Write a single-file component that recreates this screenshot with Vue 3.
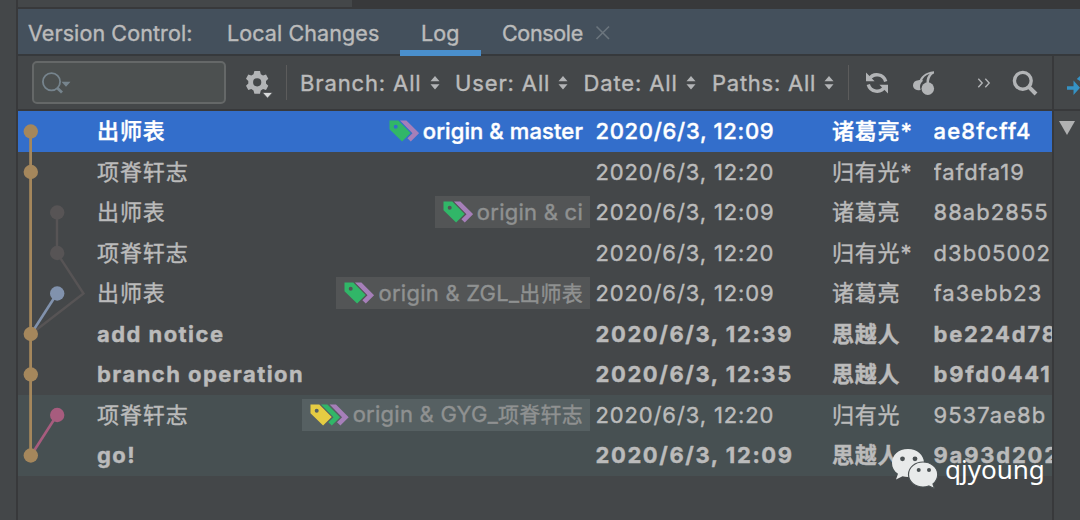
<template>
  <div class="window">
    <div class="gutter"></div>

    <div class="main">
      <div class="editor-strip">
        <div class="editor-edge"></div>
      </div>

      <div class="tabs">
        <span class="title">Version Control:</span>
        <div
          v-for="tab in tabs"
          :key="tab.name"
          :class="['tab', tab.cls, { active: tab.name === activeTab }]"
          @click="activeTab = tab.name"
        >
          {{ tab.name }}
        </div>
        <svg class="close" width="16" height="16" viewBox="0 0 16 16">
          <path d="M1.5 1.5L14 14M14 1.5L1.5 14" stroke="#6b757d" stroke-width="1.6" />
        </svg>
      </div>

      <div class="body">
        <div class="log">
          <div class="toolbar">
            <div class="search">
              <svg width="32" height="26" viewBox="0 0 32 26" fill="none">
                <circle cx="10.5" cy="9.8" r="8.6" stroke="#76848d" stroke-width="1.8" />
                <path d="M16 15.8L21 20.6" stroke="#76848d" stroke-width="2.8" />
                <path d="M20.5 9.8H29.5L25 14.8Z" fill="#76848d" />
              </svg>
            </div>
            <svg class="gear" width="28" height="30" viewBox="0 0 28 30">
              <path
                fill="#b2b4b6"
                fill-rule="evenodd"
                d="M9.4 1H15L15.8 4.2L18 5.4L21 4.4L23.3 8.7L21 11V13.6L23.3 15.7L21 20L18 19.1L15.8 20.4L15 23.7H9.4L8.5 20.4L6.3 19.1L3.3 20L1 15.7L3.3 13.5V11L1 8.7L3.3 4.4L6.3 5.4L8.5 4.2ZM12.2 8.2A4.1 4.1 0 1 0 12.2 16.4A4.1 4.1 0 1 0 12.2 8.2Z"
              />
              <path d="M17 22.3H28L22.5 28.3Z" fill="#d8dadb" stroke="#444749" stroke-width="1" />
            </svg>
            <i class="divider"></i>
            <div v-for="f in filters" :key="f" class="filter">
              <span>{{ f }}: All</span>
              <svg width="10" height="16" viewBox="0 0 10 16" fill="#b2b4b6">
                <path d="M0.5 6.3L5 1L9.5 6.3ZM0.5 9.3H9.5L5 14.6Z" />
              </svg>
            </div>
            <i class="divider second"></i>
            <svg class="refresh" width="24" height="24" viewBox="0 0 24 24">
              <g fill="none" stroke="#b2b4b6" stroke-width="3.4">
                <path d="M4.2 8.3A9 9 0 0 1 20.7 10.5" />
                <path d="M3.3 13.5A9 9 0 0 0 19.8 15.7" />
              </g>
              <path d="M1 1.5V10.3H9.6ZM23 22.5V13.7H14.4Z" fill="#b2b4b6" />
            </svg>
            <svg class="cherry" width="26" height="26" viewBox="0 0 26 26">
              <g fill="#b2b4b6">
                <path d="M7.3 10.2C9 9.2 11 9.7 12.2 10.7C9.5 12.5 8.2 16 9.7 19.7C5.5 21.5 2 18.7 2 15.3C2 12.5 4 10.5 7.3 10.2Z" />
                <circle cx="16.8" cy="18.6" r="6.3" />
                <path d="M8 12.5C9.3 7 13.5 2.2 23 1.2V3.5C20 4.5 18 8.5 18 13H15.5C15.3 8.7 16.5 5.8 18.8 3.8C14.5 5 11.5 8 10.5 12Z" />
              </g>
            </svg>
            <svg class="more" width="14" height="10" viewBox="0 0 14 10">
              <path d="M1.3 0.8L5.2 5L1.3 9.2M8.3 0.8L12.2 5L8.3 9.2" fill="none" stroke="#b2b4b6" stroke-width="1.4" />
            </svg>
            <svg class="find" width="26" height="26" viewBox="0 0 26 26" fill="none" stroke="#b2b4b6">
              <circle cx="10.8" cy="10.8" r="8.4" stroke-width="3.4" />
              <path d="M16.8 16.8L24 24" stroke-width="4" />
            </svg>
          </div>

          <div class="table">
            <svg class="graph" width="79" height="365" viewBox="0 0 79 365" fill="none">
              <path d="M39 101.5V142L65.5 182.5L13 223" stroke="#575455" stroke-width="2.4" />
              <path d="M39 182.5L13 223" stroke="#8192ad" stroke-width="2.6" />
              <path d="M39 304L13 344.5" stroke="#a75c7e" stroke-width="2.6" />
              <path d="M12.6 20.5V344.5" stroke="#a5875c" stroke-width="2.8" />
              <circle v-for="n in nodes" :key="n.y" :cx="n.x" :cy="n.y" r="7.2" :fill="n.color" />
            </svg>
            <div
              v-for="c in commits"
              :key="c.hash"
              :class="['row', { selected: c.selected, own: c.own, current: c.current }]"
            >
              <div class="subject">{{ c.subject }}</div>
              <div class="ref-cell">
                <div v-if="c.tags" class="ref">
                  <svg
                    :width="c.tags.length * 8.6 + 13"
                    height="22"
                    :viewBox="`0 0 ${c.tags.length * 8.6 + 13} 22`"
                  >
                    <path
                      v-for="(color, i) in c.tags.slice(1)"
                      :key="color"
                      :transform="`translate(${(i + 1) * 8.6} 0)`"
                      d="M2.4 0.5H8.8L21.5 13.2L13.2 21.5L9.8 18.3L14.9 13.2Z"
                      :fill="color"
                    />
                    <path
                      fill-rule="evenodd"
                      d="M0.5 0.5H9.3L21.7 13L13.1 21.5L0.5 9.3ZM6.7 4.8A2 2 0 1 0 6.7 8.8A2 2 0 1 0 6.7 4.8Z"
                      :fill="c.tags[0]"
                    />
                  </svg>
                  <span>{{ c.branch }}<b v-if="c.cjk">{{ c.cjk }}</b></span>
                </div>
              </div>
              <div class="date">{{ c.date }}</div>
              <div class="author">{{ c.author }}</div>
              <div class="hash">{{ c.hash }}</div>
            </div>
          </div>
        </div>

        <div class="side">
          <div class="side-bar">
            <svg width="13" height="24" viewBox="0 0 13 24" fill="#3592c4">
              <path d="M0 11.3H6.5V5.5L13 12.8L6.5 20V14.8H0ZM9.8 4L13 1V6Z" />
            </svg>
          </div>
          <div class="side-tree">
            <svg width="16" height="14" viewBox="0 0 16 14">
              <path d="M0 0H16L8 14Z" fill="#b0b1b2" />
            </svg>
          </div>
        </div>
      </div>
    </div>

    <div class="watermark">
      <svg width="48" height="42" viewBox="0 0 48 42">
        <path
          d="M17 1C7.5 1 1 7 1 15C1 19.5 3.2 23.2 7 25.8L5 31.5L11.5 28.3C13.3 28.8 15 29 17 29C26 29 33 23 33 15C33 7 26 1 17 1Z"
          fill="#e8eaea"
        />
        <path
          d="M32 14C24 14 17.5 19.5 17.5 26.5C17.5 33.5 24 39 32 39C34 39 36 38.7 37.7 38L43.5 40.5L42 36C45 33.5 46.7 30.5 46.7 26.5C46.7 19.5 40 14 32 14Z"
          fill="#e8eaea"
          stroke="#4a5052"
          stroke-width="1.2"
        />
        <g fill="#4a5052">
          <circle cx="11.5" cy="10.8" r="2.4" />
          <circle cx="24" cy="10.8" r="2.4" />
          <circle cx="27.7" cy="22" r="2" />
          <circle cx="38" cy="22" r="2" />
        </g>
      </svg>
      <span>qjyoung</span>
    </div>
  </div>
</template>

<script setup>
import { ref } from "vue";

const tabs = [
  { name: "Local Changes", cls: "local" },
  { name: "Log", cls: "log-tab" },
  { name: "Console", cls: "console" },
];
const activeTab = ref("Log");

const filters = ["Branch", "User", "Date", "Paths"];

const GREEN = "#31b668";
const PURPLE = "#a67fb9";
const YELLOW = "#e5cc43";

const commits = [
  { subject: "出师表", branch: "origin & master", tags: [GREEN, PURPLE], date: "2020/6/3, 12:09", author: "诸葛亮*", hash: "ae8fcff4", selected: true },
  { subject: "项脊轩志", date: "2020/6/3, 12:20", author: "归有光*", hash: "fafdfa19" },
  { subject: "出师表", branch: "origin & ci", tags: [GREEN, PURPLE], date: "2020/6/3, 12:09", author: "诸葛亮", hash: "88ab2855" },
  { subject: "项脊轩志", date: "2020/6/3, 12:20", author: "归有光*", hash: "d3b05002" },
  { subject: "出师表", branch: "origin & ZGL_", cjk: "出师表", tags: [GREEN, PURPLE], date: "2020/6/3, 12:09", author: "诸葛亮", hash: "fa3ebb23" },
  { subject: "add notice", date: "2020/6/3, 12:39", author: "思越人", hash: "be224d78", own: true },
  { subject: "branch operation", date: "2020/6/3, 12:35", author: "思越人", hash: "b9fd0441", own: true },
  { subject: "项脊轩志", branch: "origin & GYG_", cjk: "项脊轩志", tags: [YELLOW, GREEN, PURPLE], date: "2020/6/3, 12:20", author: "归有光", hash: "9537ae8b", current: true },
  { subject: "go!", date: "2020/6/3, 12:09", author: "思越人", hash: "9a93d202", own: true, current: true },
];

// 提交圖節點
const nodes = [
  { x: 12.8, y: 20.5, color: "#a5875c" },
  { x: 12.8, y: 61, color: "#a5875c" },
  { x: 39.2, y: 101.5, color: "#575455" },
  { x: 39.2, y: 142, color: "#575455" },
  { x: 39.2, y: 182.5, color: "#8192ad" },
  { x: 12.8, y: 223, color: "#a5875c" },
  { x: 12.8, y: 263.5, color: "#a5875c" },
  { x: 39.2, y: 304, color: "#a75c7e" },
  { x: 12.8, y: 344.5, color: "#a5875c" },
];
</script>

<style>
body {
  background: #444749;
}
</style>

<style scoped>
.window {
  position: relative;
  display: flex;
  width: 1080px;
  height: 520px;
  overflow: hidden;
  background: #444749;
  color: #bbbbbb;
  font-family: Inter, "Noto Sans CJK SC", sans-serif;
  font-size: 22px;
  white-space: nowrap;
  -webkit-text-stroke: 0.4px currentColor;
}
.window * {
  box-sizing: border-box;
}
svg {
  display: block;
  flex: none;
}

.gutter {
  flex: none;
  width: 18px;
  border-right: 2px solid #38393b;
}
.main {
  flex: none;
  width: 1062px;
  display: flex;
  flex-direction: column;
}
.editor-strip {
  height: 9px;
  background: #38393b;
}
.editor-edge {
  width: 334px;
  height: 7px;
  background: #444749;
}

/* 分頁列 */
.tabs {
  display: flex;
  align-items: stretch;
  height: 47px;
  padding-left: 10px;
  border-bottom: 2px solid #36393c;
  background: #44505c;
  font-size: 21.5px;
  line-height: 49px;
}
.title {
  width: 181px;
  letter-spacing: 0.1px;
}
.tab {
  height: 47px;
  letter-spacing: 0.1px;
}
.tab.local {
  width: 191px;
  padding-left: 18px;
}
.tab.log-tab {
  width: 81px;
  padding-left: 21px;
}
.tab.console {
  width: 114px;
  padding-left: 21px;
  letter-spacing: -0.35px;
}
.tab.active {
  border-bottom: 6px solid #4a8fcc;
}
.close {
  margin: 16px 0 0;
}

.body {
  flex: 1;
  display: flex;
}
.log {
  width: 1034px;
  overflow: hidden;
}

/* 工具列 */
.toolbar {
  display: flex;
  align-items: center;
  height: 55px;
  padding-left: 14px;
  border-bottom: 2px solid #38393b;
}
.search {
  width: 194px;
  height: 43px;
  padding: 9px 0 0 7px;
  border: 2px solid #656868;
  border-radius: 5px;
  background: #4c5050;
}
.gear {
  margin: 4px 0 0 19px;
}
.divider {
  width: 1px;
  height: 35px;
  margin: 0 13px;
  background: #5c5c5c;
}
.filter {
  display: flex;
  align-items: center;
  width: 128.5px;
  gap: 8px;
  letter-spacing: 0.87px;
}
.filter:nth-of-type(2) {
  width: 155px;
}
.filter:nth-of-type(5) {
  width: 123px;
  letter-spacing: 0.75px;
}
.divider.second {
  margin: 0 16px 0 13px;
}
.cherry {
  margin-left: 22px;
}
.more {
  margin-left: 40px;
}
.find {
  margin-left: 21px;
}

/* 提交列表 */
.table {
  position: relative;
}
.graph {
  position: absolute;
  left: 0;
  top: 0;
}
.row {
  display: flex;
  align-items: center;
  height: 40.5px;
  padding-left: 79px;
  line-height: 40px;
}
.subject {
  width: 206px;
  letter-spacing: 0.9px;
}
.ref-cell {
  display: flex;
  justify-content: flex-end;
  width: 287px;
}
.ref {
  display: flex;
  align-items: center;
  gap: 4px;
  height: 32px;
  padding: 0 7px 0 8px;
  background: #535556;
  color: #8f9191;
  letter-spacing: 0.25px;
  line-height: 32px;
}
.ref b {
  font-size: 21px;
  font-weight: 400;
}
.date {
  width: 242px;
  padding-left: 5.5px;
  letter-spacing: 0.87px;
}
.author {
  width: 101.5px;
  letter-spacing: 0.8px;
}
.hash {
  width: 118.5px;
  overflow: hidden;
  letter-spacing: 1.05px;
}
.row.selected {
  background: #336ecb;
  color: #ffffff;
  font-weight: 500;
}
.row.selected .date {
  letter-spacing: 0.68px;
}
.row.selected .ref {
  background: none;
  color: #ffffff;
  letter-spacing: 0.1px;
}
.row.selected .hash {
  letter-spacing: 1.2px;
}
.row.own {
  font-weight: 700;
}
.row.own .subject {
  letter-spacing: 1.45px;
}
.row.own .date {
  letter-spacing: 1.6px;
}
.row.own .hash {
  letter-spacing: 1.8px;
}
.row.current {
  background: #475052;
}
.row.current .ref {
  background: #566062;
}

/* 右側面板 */
.side {
  width: 28px;
  border-left: 2px solid #38393b;
}
.side-bar {
  height: 55px;
  padding: 19px 0 0 13px;
  border-bottom: 2px solid #38393b;
}
.side-tree {
  padding: 10px 0 0 5px;
}

.watermark {
  position: absolute;
  left: 891px;
  top: 448px;
  display: flex;
  color: #ffffff;
  font-family: "Noto Sans", sans-serif;
  font-size: 26px;
  line-height: 42px;
  -webkit-text-stroke: 0;
}
.watermark span {
  margin-left: 6px;
}
</style>
